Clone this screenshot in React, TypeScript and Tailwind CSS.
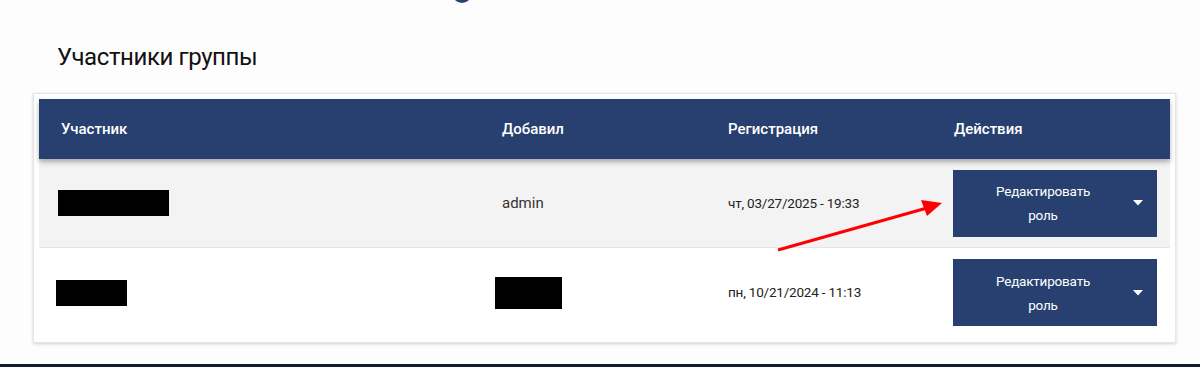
import React from 'react';

const rows = [
  { name: 111, nameShift: 0, added: 'admin', date: 'чт, 03/27/2025 - 19:33', shade: true },
  { name: 71, nameShift: -2, added: null, date: 'пн, 10/21/2024 - 11:13', shade: false },
];

function Caret() {
  return (
    <svg width="10" height="6" viewBox="0 0 10 6" className="shrink-0">
      <path d="M0 0 L10 0 L5 5.5 Z" fill="#ffffff" />
    </svg>
  );
}

function RoleButton() {
  return (
    <button className="flex h-[67px] w-[204px] items-center bg-[#27406f] pr-[14px] text-white">
      <span className="flex-1 text-center text-[13.5px] leading-[24px] tracking-[-0.2px]">
        Редактировать
        <br />
        роль
      </span>
      <Caret />
    </button>
  );
}

export default function App() {
  return (
    <div className="flex h-[367px] flex-col bg-[#fdfdfd] font-['Roboto',_sans-serif] text-[#222]">
      <div className="h-[4px] overflow-hidden">
        <div className="-mt-[17px] ml-[452px] h-[20px] w-[20px] rounded-full bg-[#27406f]" />
      </div>

      <h2 className="ml-[57px] mt-[37px] text-[24px] leading-[32px] tracking-[-0.4px] text-[#111]">
        Участники группы
      </h2>

      <div className="relative ml-[33px] mt-[20px] w-[1143px] border border-[#e6e6e6] bg-white p-[5px] shadow-[0_1px_3px_rgba(0,0,0,0.18)]">
        <div className="relative z-10 grid h-[60px] grid-cols-[441px_226px_226px_1fr] items-center bg-[#27406f] text-[15px] font-medium text-white shadow-[0_3px_5px_rgba(0,0,0,0.3)]">
          <div className="pl-[22px]">Участник</div>
          <div className="pl-[22px]">Добавил</div>
          <div className="pl-[22px]">Регистрация</div>
          <div className="pl-[22px]">Действия</div>
        </div>

        {rows.map((r, i) => (
          <div
            key={i}
            className={
              'grid h-[89px] grid-cols-[441px_226px_226px_1fr] items-center text-[14px] ' +
              (r.shade ? 'border-b border-[#e4e4e4] bg-[#f3f3f3]' : 'bg-white')
            }
          >
            <div className="pl-[19px]">
              <div className="h-[26px] bg-black" style={{ width: r.name, marginLeft: r.nameShift }} />
            </div>
            <div className="pl-[22px]">
              {r.added ? (
                <span className="text-[15px] text-[#333]">{r.added}</span>
              ) : (
                <div className="-ml-[7px] h-[32px] w-[67px] bg-black" />
              )}
            </div>
            <div className="pl-[22px] text-[13.5px] tracking-[-0.2px] text-[#222]">{r.date}</div>
            <div className="pl-[21px]">
              <RoleButton />
            </div>
          </div>
        ))}

        <svg
          className="pointer-events-none absolute left-[740px] top-[104px] z-20"
          width="180"
          height="60"
          viewBox="0 0 180 60"
        >
          <line x1="4" y1="52" x2="160" y2="8" stroke="#ff0000" strokeWidth="3" />
          <path d="M168 5 L147 2 L153 18 Z" fill="#ff0000" />
        </svg>
      </div>

      <div className="mt-auto h-[3px] bg-[#141c30]" />
    </div>
  );
}
